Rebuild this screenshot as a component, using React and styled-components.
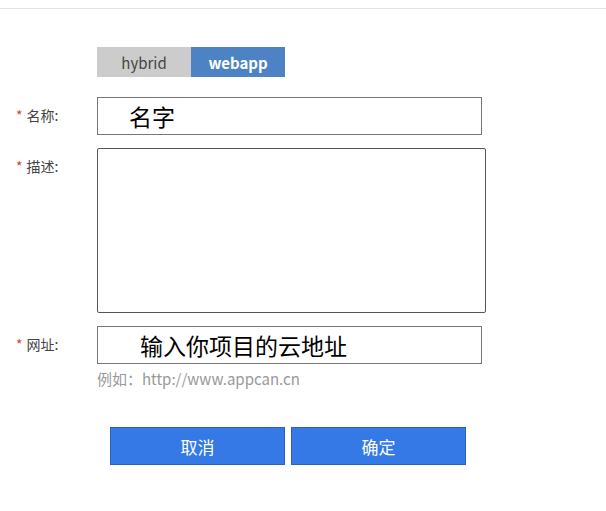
import React from 'react'
import styled, { createGlobalStyle } from 'styled-components'

const Global = createGlobalStyle`
body{
  margin:0;
  background:#fff;
  font-family: "Noto Sans CJK SC", "Noto Sans", sans-serif;
}
`

const Page = styled.div`
width: 606px;
height: 511px;
border-top: 1px solid #e2e2e2;
margin-top: 8px;
box-sizing: border-box;
`

const Tabs = styled.div`
display: flex;
margin: 38px 0 0 97px;
height: 30px;
`

const Tab = styled.div`
width: 94px;
height: 30px;
display: flex;
align-items: center;
justify-content: center;
font-size: 15px;
background-color: ${p => p.active ? '#4d83c5' : '#cccccc'};
color: ${p => p.active ? '#fff' : '#444'};
font-weight: ${p => p.active ? 700 : 400};
`

const Row = styled.div`
display: grid;
grid-template-columns: 97px auto;
margin-top: ${p => p.top}px;
`

const Label = styled.div`
padding: ${p => p.pad}px 0 0 16px;
font-size: 14px;
color: #444;
line-height: 20px;
`

const Star = styled.span`
color: #e53935;
margin-right: 4px;
`

const Field = styled.div`
width: ${p => p.w}px;
height: ${p => p.h}px;
border: 1px solid ${p => p.dark ? '#555' : '#777'};
border-radius: ${p => p.dark ? 2 : 0}px;
box-sizing: border-box;
padding-left: ${p => p.indent}px;
font-size: 23px;
color: #000;
display: flex;
align-items: ${p => p.dark ? 'flex-start' : 'center'};
line-height: 1;
`

const Hint = styled.div`
margin: 4px 0 0 97px;
font-size: 15px;
color: #999;
`

const Actions = styled.div`
display: flex;
gap: 6px;
margin: 38px 0 0 110px;
`

const Button = styled.div`
width: 175px;
height: 38px;
box-sizing: border-box;
background-color: #3579e6;
border: 1px solid #2b60bf;
color: #fff;
font-size: 17px;
display: flex;
align-items: center;
justify-content: center;
`

const App = () => {
  return (
    <Page>
      <Global />
      <Tabs>
        <Tab>hybrid</Tab>
        <Tab active>webapp</Tab>
      </Tabs>
      <Row top={20}>
        <Label pad={8}><Star>*</Star>名称:</Label>
        <Field w={385} h={38} indent={31}>名字</Field>
      </Row>
      <Row top={13}>
        <Label pad={8}><Star>*</Star>描述:</Label>
        <Field w={389} h={165} dark />
      </Row>
      <Row top={13}>
        <Label pad={8}><Star>*</Star>网址:</Label>
        <Field w={385} h={38} indent={42}>输入你项目的云地址</Field>
      </Row>
      <Hint>例如：http://www.appcan.cn</Hint>
      <Actions>
        <Button>取消</Button>
        <Button>确定</Button>
      </Actions>
    </Page>
  )
}

export default App
